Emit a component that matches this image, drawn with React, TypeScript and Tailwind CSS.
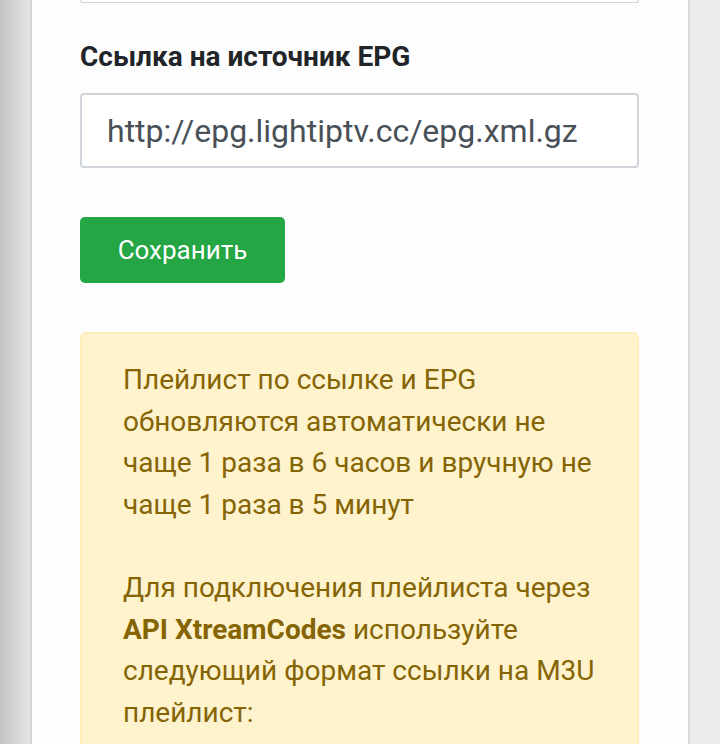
export default function App() {
  return (
    <div className="flex h-[744px] w-[720px] overflow-hidden bg-[#ececec] font-['Roboto',sans-serif]">
      {/* left page edge */}
      <div className="w-[30px] shrink-0 bg-gradient-to-r from-[#c4c4c4] to-[#e6e6e6]" />
      <div className="w-[2px] shrink-0 bg-[#d6d6d6]" />

      {/* card */}
      <div className="flex w-[656px] shrink-0 flex-col bg-[#fdfdfd] pl-[48px] pr-[49px]">
        {/* bottom of previous input */}
        <div className="h-[3px] rounded-b border border-t-0 border-[#ced4da] bg-white" />

        <label className="mt-[38px] text-[28px] font-bold leading-[32px] text-[#212529]">
          Ссылка на источник EPG
        </label>

        <div className="mt-[20px] flex h-[75px] items-center rounded border-2 border-[#ced4da] bg-white px-[25px]">
          <span className="text-[32px] text-[#495057]">http://epg.lightiptv.cc/epg.xml.gz</span>
        </div>

        <button className="mt-[49px] flex h-[66px] w-[205px] items-center justify-center rounded-[5px] bg-[#23a643] text-[26px] text-white">
          Сохранить
        </button>

        <div className="mt-[49px] flex-1 rounded-t-[6px] border-2 border-b-0 border-[#ffeeba] bg-[#fff3cd] pl-[41px] pr-[10px] pt-[25px] text-[28px] leading-[41.7px] text-[#856404]">
          <p>
            Плейлист по ссылке и EPG
            <br />
            обновляются автоматически не
            <br />
            чаще 1 раза в 6 часов и вручную не
            <br />
            чаще 1 раза в 5 минут
          </p>
          <p className="mt-[41px]">
            Для подключения плейлиста через
            <br />
            <b>API XtreamCodes</b> используйте
            <br />
            следующий формат ссылки на M3U
            <br />
            плейлист:
          </p>
        </div>
      </div>

      {/* right page edge */}
      <div className="w-[2px] shrink-0 bg-[#d9d9d9]" />
      <div className="flex-1 bg-[#ececec]" />
    </div>
  );
}
